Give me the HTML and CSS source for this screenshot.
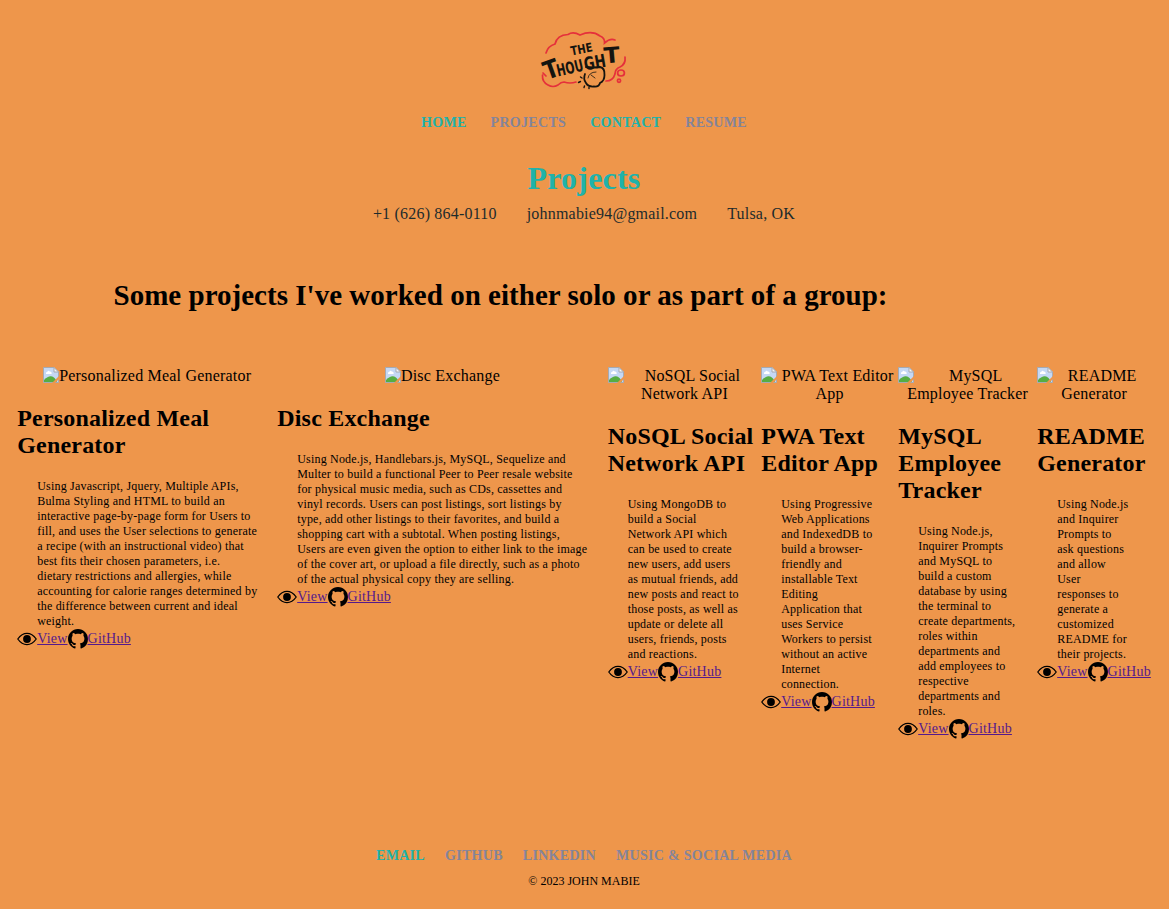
FILE: index.html
```
<!DOCTYPE html>
<html lang="en">
<head>
<meta charset="utf-8">
<title>Projects</title>
<link rel="stylesheet" href="styles.css">
</head>
<body>
<svg class="defs" width="0" height="0">
  <symbol id="eye" viewBox="0 0 20 20"><path d="M.8 10Q4.800 4.300 10 4.300T19.200 10Q15.200 15.700 10 15.700T.8 10Z" fill="none" stroke="#000" stroke-width="1.300"/><circle cx="10" cy="10" r="3.900"/></symbol>
  <symbol id="github" viewBox="0 0 16 16"><path d="M8 0C3.58 0 0 3.58 0 8c0 3.54 2.29 6.53 5.47 7.59.4.07.55-.17.55-.38 0-.19-.01-.82-.01-1.49-2.01.37-2.53-.49-2.69-.94-.09-.23-.48-.94-.82-1.13-.28-.15-.68-.52-.01-.53.63-.01 1.08.58 1.23.82.72 1.21 1.87.87 2.33.66.07-.52.28-.87.51-1.07-1.78-.2-3.64-.89-3.64-3.95 0-.87.31-1.59.82-2.15-.08-.2-.36-1.02.08-2.12 0 0 .67-.21 2.2.82.64-.18 1.32-.27 2-.27s1.36.09 2 .27c1.53-1.04 2.2-.82 2.2-.82.44 1.1.16 1.92.08 2.12.51.56.82 1.27.82 2.15 0 3.07-1.87 3.75-3.65 3.95.29.25.54.73.54 1.48 0 1.07-.01 1.93-.01 2.2 0 .21.15.46.55.38A8.01 8.01 0 0 0 16 8c0-4.42-3.58-8-8-8z"/></symbol>
  <symbol id="broken" viewBox="0 0 16 16"><path d="M.5.5H11L15.5 5V15.5H.5Z" fill="#c5d8f5" stroke="#a5aab3"/><path d="M11 .5V5H15.5Z" fill="#f5f5f5" stroke="#a5aab3"/><path d="M3 7Q2.4 5 4.4 4.8Q5.2 2.8 6.8 4.4Q9 4.3 8.6 7Z" fill="#fff"/><path d="M1 15V13Q5 9 8 9.3Q12 10 14 15Z" fill="#56ad42"/><path d="M9 16 16 9V12L12 16Z" fill="#ee964b"/></symbol>
</svg>
<header>
  <svg class="logo" viewBox="0 0 110 75" width="110" height="75">
    <g fill="none" stroke="#e5303b" stroke-width="1.700" stroke-linecap="round">
      <path d="M16 28Q18 21 25 19Q27 10 38 9.500Q43 6 50 10Q62 5 70 11Q75 13 74.500 18Q80 13 85 15M95 32Q96 39 90 42Q85 44 85 49Q83 56 76 56M12.500 50Q12 57 18 60Q23 63 28 60Q31 57 34 57Q40 59 46 57M13 48 16 51"/>
      <ellipse cx="91" cy="48" rx="3.400" ry="3"/><circle cx="89" cy="55.700" r="1.600"/>
    </g>
    <g class="logo-text">
      <text transform="translate(41.500 30.500) rotate(-11)" font-size="12.500" textLength="22" lengthAdjust="spacingAndGlyphs">THE</text>
      <text transform="translate(17 55) rotate(-20)" font-size="25" textLength="15" lengthAdjust="spacingAndGlyphs">T</text>
      <text transform="translate(28 51.500) rotate(-13)" font-size="16.500" textLength="27" lengthAdjust="spacingAndGlyphs">HOU</text>
      <text transform="translate(55 45.500) rotate(-10)" font-size="18" textLength="22" lengthAdjust="spacingAndGlyphs">GH</text>
      <text transform="translate(74.500 38.500) rotate(-5)" font-size="22" textLength="16" lengthAdjust="spacingAndGlyphs">T</text>
    </g>
    <g fill="none" stroke="#15140f" stroke-width="1.800" stroke-linecap="round">
      <path d="M56 42Q64 43 70 42Q75 43 74.500 50Q74.500 56 70 58Q69 62 64 61.500Q58 62 56 58Q53 54 55 49"/>
      <path d="M58 53Q59 47 66 47M61 50 65 53" stroke-width=".8"/>
      <path d="M50.500 52 52 53M48.500 57.500 50.500 56.500M54 62.500 54.500 61M59 63.500 59 62.500" stroke-width="1.400"/>
    </g>
  </svg>
  <nav class="nav top-nav"><a class="teal">HOME</a><a>PROJECTS</a><a class="teal">CONTACT</a><a>RESUME</a></nav>
  <h1>Projects</h1>
  <div class="contact"><span>+1 (626) 864-0110</span><span>johnmabie94@gmail.com</span><span>Tulsa, OK</span></div>
</header>
<main>
  <h2 class="intro">Some projects I've worked on either solo or as part of a group:</h2>
  <div class="projects">
    <article>
      <div class="shot inline"><svg><use href="#broken"/></svg>Personalized Meal Generator</div>
      <h2>Personalized Meal<br>Generator</h2>
      <p>Using Javascript, Jquery, Multiple APIs,<br>Bulma Styling and HTML to build an<br>interactive page-by-page form for Users to<br>fill, and uses the User selections to generate<br>a recipe (with an instructional video) that<br>best fits their chosen parameters, i.e.<br>dietary restrictions and allergies, while<br>accounting for calorie ranges determined by<br>the difference between current and ideal<br>weight.</p>
      <div class="links"><svg><use href="#eye"/></svg><a>View</a><svg><use href="#github"/></svg><a>GitHub</a></div>
    </article>
    <article>
      <div class="shot inline"><svg><use href="#broken"/></svg>Disc Exchange</div>
      <h2>Disc Exchange</h2>
      <p>Using Node.js, Handlebars.js, MySQL, Sequelize and<br>Multer to build a functional Peer to Peer resale website<br>for physical music media, such as CDs, cassettes and<br>vinyl records. Users can post listings, sort listings by<br>type, add other listings to their favorites, and build a<br>shopping cart with a subtotal. When posting listings,<br>Users are even given the option to either link to the image<br>of the cover art, or upload a file directly, such as a photo<br>of the actual physical copy they are selling.</p>
      <div class="links"><svg><use href="#eye"/></svg><a>View</a><svg><use href="#github"/></svg><a>GitHub</a></div>
    </article>
    <article>
      <div class="shot"><svg><use href="#broken"/></svg>NoSQL Social<br>Network API</div>
      <h2>NoSQL Social<br>Network API</h2>
      <p>Using MongoDB to<br>build a Social<br>Network API which<br>can be used to create<br>new users, add users<br>as mutual friends, add<br>new posts and react to<br>those posts, as well as<br>update or delete all<br>users, friends, posts<br>and reactions.</p>
      <div class="links"><svg><use href="#eye"/></svg><a>View</a><svg><use href="#github"/></svg><a>GitHub</a></div>
    </article>
    <article>
      <div class="shot"><svg><use href="#broken"/></svg>PWA Text Editor<br>App</div>
      <h2>PWA Text<br>Editor App</h2>
      <p>Using Progressive<br>Web Applications<br>and IndexedDB to<br>build a browser-<br>friendly and<br>installable Text<br>Editing<br>Application that<br>uses Service<br>Workers to persist<br>without an active<br>Internet<br>connection.</p>
      <div class="links"><svg><use href="#eye"/></svg><a>View</a><svg><use href="#github"/></svg><a>GitHub</a></div>
    </article>
    <article>
      <div class="shot"><svg><use href="#broken"/></svg>MySQL<br>Employee Tracker</div>
      <h2>MySQL<br>Employee<br>Tracker</h2>
      <p>Using Node.js,<br>Inquirer Prompts<br>and MySQL to<br>build a custom<br>database by using<br>the terminal to<br>create departments,<br>roles within<br>departments and<br>add employees to<br>respective<br>departments and<br>roles.</p>
      <div class="links"><svg><use href="#eye"/></svg><a>View</a><svg><use href="#github"/></svg><a>GitHub</a></div>
    </article>
    <article>
      <div class="shot"><svg><use href="#broken"/></svg>README<br>Generator</div>
      <h2>README<br>Generator</h2>
      <p>Using Node.js<br>and Inquirer<br>Prompts to<br>ask questions<br>and allow<br>User<br>responses to<br>generate a<br>customized<br>README for<br>their projects.</p>
      <div class="links"><svg><use href="#eye"/></svg><a>View</a><svg><use href="#github"/></svg><a>GitHub</a></div>
    </article>
  </div>
</main>
<footer>
  <nav class="nav"><a class="teal">EMAIL</a><a>GITHUB</a><a>LINKEDIN</a><a>MUSIC &amp; SOCIAL MEDIA</a></nav>
  <div class="copy">© 2023 JOHN MABIE</div>
</footer>
</body>
</html>
```
FILE: styles.css
```
* { box-sizing: border-box; }
body {
  margin: 0;
  height: 909px;
  padding-right: 1px;
  display: flex;
  flex-direction: column;
  background: #ee964b;
  color: #000;
  font: 16px/18px "Liberation Serif", "Times New Roman", serif;
  letter-spacing: .2px;
  white-space: nowrap;
  overflow: hidden;
}
.defs { position: absolute; }
header { display: flex; flex-direction: column; align-items: center; padding-top: 25px; }
.logo { display: block; margin-left: 2px; }
.logo-text { font-family: "DejaVu Sans", sans-serif; font-weight: 700; fill: #15140f; letter-spacing: 0; }
.nav { display: flex; justify-content: center; gap: 20px; font-size: 14px; line-height: 16px; font-weight: 700; letter-spacing: .3px; color: #84849a; }
.top-nav { gap: 24px; margin-top: 15px; }
.teal { color: #20b2aa; }
h1 { margin: 29px 0 0; font-size: 32px; line-height: 36px; color: #20b2aa; }
.contact { display: flex; gap: 30px; margin-top: 9px; color: #1d2b2b; }
.intro { margin: 55px 0 0 113.500px; font-size: 29px; line-height: 34px; letter-spacing: .02px; }
.projects {
  display: grid;
  grid-template-columns: 260px 330.500px 153.500px 137px 139px 114px;
  margin: 55px 0 0 17.200px;
}
.shot { text-align: center; }
.shot svg { float: left; width: 16px; height: 16px; }
.shot.inline { height: 18px; }
.shot.inline svg { float: none; vertical-align: -2px; }
article h2 { margin: 20px 0; font-size: 24px; line-height: 27px; }
p { margin: 0 0 0 20px; font-size: 12px; line-height: 15px; }
.links { display: flex; height: 20px; font-size: 14px; line-height: 20px; letter-spacing: .22px; color: #551a8b; }
.links svg { width: 20px; height: 20px; flex: none; }
.links a { text-decoration: underline; }
footer { margin-top: auto; padding-bottom: 21px; }
.copy { margin-top: 10px; text-align: center; font-size: 12px; line-height: 14px; letter-spacing: 0; }
```
